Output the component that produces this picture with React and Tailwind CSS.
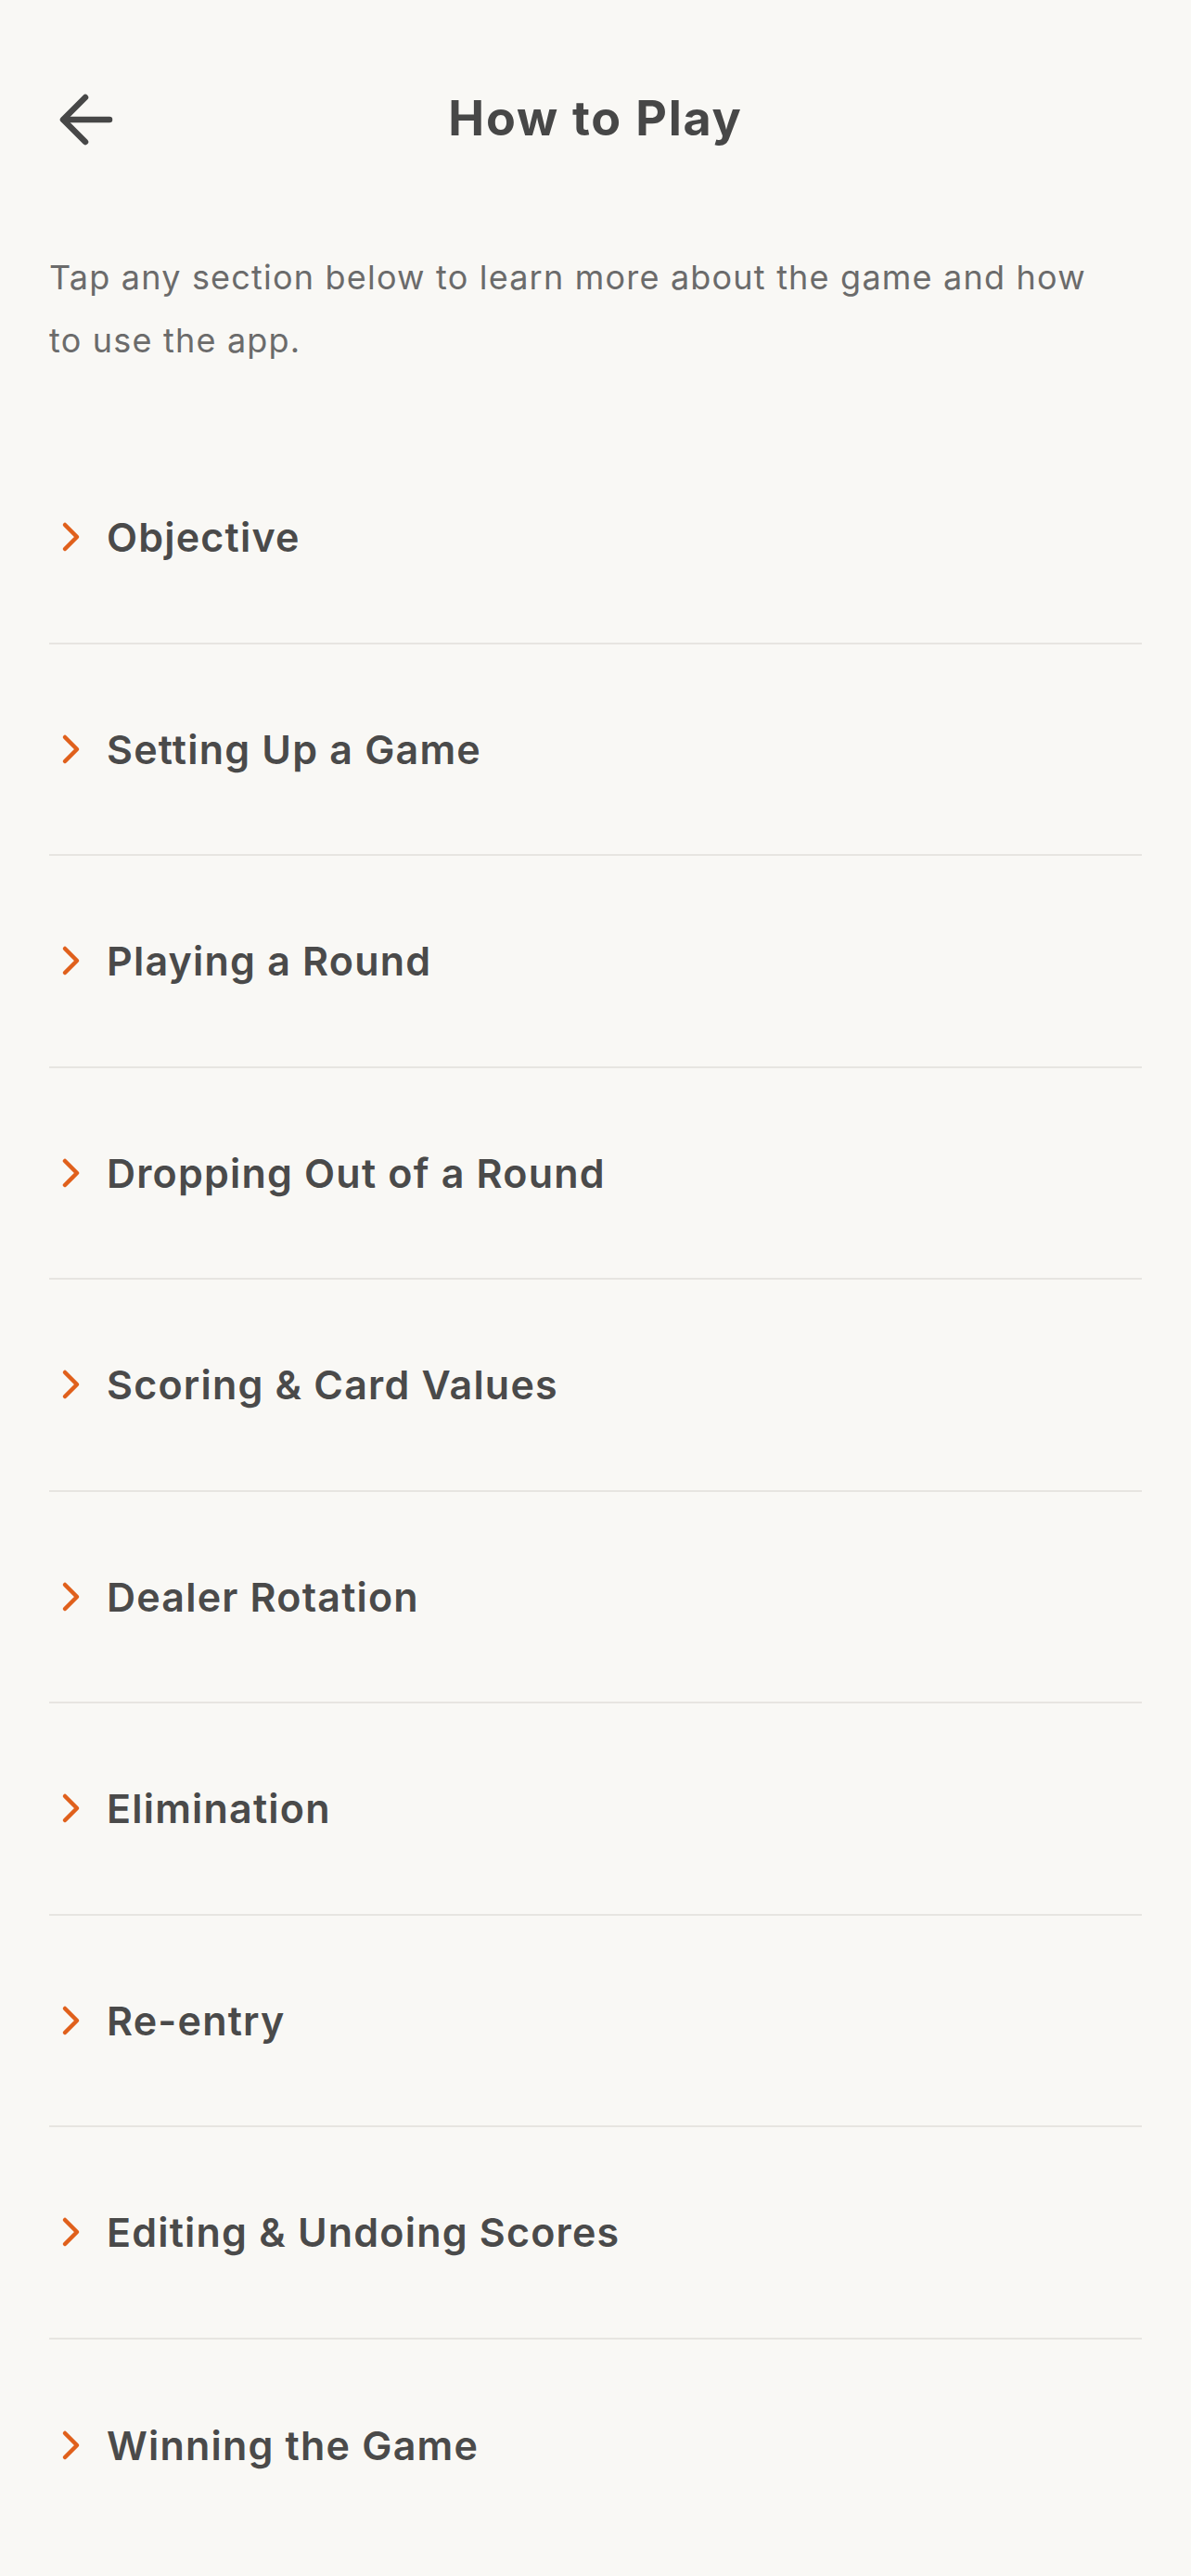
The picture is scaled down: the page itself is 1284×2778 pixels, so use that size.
import React from 'react';

const sections = [
  'Objective',
  'Setting Up a Game',
  'Playing a Round',
  'Dropping Out of a Round',
  'Scoring & Card Values',
  'Dealer Rotation',
  'Elimination',
  'Re-entry',
  'Editing & Undoing Scores',
  'Winning the Game',
];

const Chevron = () => (
  <svg width="22" height="34" viewBox="0 0 22 34" fill="none" className="flex-shrink-0">
    <path d="M4 4 L17 17 L4 30" stroke="#e0601c" strokeWidth="4.5" strokeLinecap="round" strokeLinejoin="round" />
  </svg>
);

const BackArrow = () => (
  <svg width="62" height="60" viewBox="0 0 62 60" fill="none">
    <path d="M30 6 L6 30 L30 54" stroke="#474747" strokeWidth="6.5" strokeLinecap="round" strokeLinejoin="round" />
    <path d="M7 30 H56" stroke="#474747" strokeWidth="6.5" strokeLinecap="round" />
  </svg>
);

const App = () => {
  return (
    <div className="min-h-screen bg-[#f9f8f5] font-['Inter',sans-serif]">
      {/* Header */}
      <div className="relative h-[258px] flex items-center justify-center px-[53px]">
        <button className="absolute left-[62px] top-[99px]">
          <BackArrow />
        </button>
        <h1 className="text-[52px] font-bold text-[#474747] tracking-[1.8px] -mt-[2px]">How to Play</h1>
      </div>

      {/* Intro */}
      <p className="mt-[7px] pl-[53px] pr-[80px] text-[36px] leading-[68px] tracking-[1.2px] text-[#6b6b6b]">
        Tap any section below to learn more about the game and how to use the app.
      </p>

      {/* Sections */}
      <div className="mt-[65px] px-[53px]">
        {sections.map((title, i) => (
          <div
            key={title}
            className={`h-[228.5px] flex items-center gap-[27px] pl-[13px] cursor-pointer ${
              i < sections.length - 1 ? 'border-b-2 border-[#e7e5e1]' : ''
            }`}
          >
            <Chevron />
            <span className="text-[43px] font-semibold tracking-[1.2px] text-[#4a4a4a]">{title}</span>
          </div>
        ))}
      </div>
    </div>
  );
};

export default App;
